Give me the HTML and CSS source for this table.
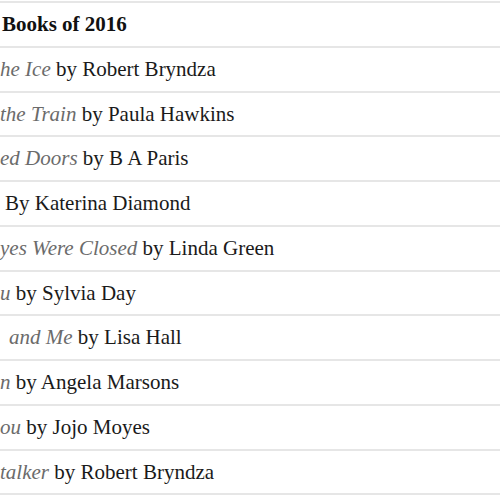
FILE: index.html
```html
<!DOCTYPE html>
<html>
<head>
<meta charset="utf-8">
<link rel="stylesheet" href="styles.css">
</head>
<body>
<ul class="list">
  <li class="row head">Books of 2016</li>
  <li class="row"><em class="title">he Ice</em> by Robert Bryndza</li>
  <li class="row"><em class="title">the Train</em> by Paula Hawkins</li>
  <li class="row"><em class="title">ed Doors</em> by B A Paris</li>
  <li class="row shift">By Katerina Diamond</li>
  <li class="row"><em class="title">yes Were Closed</em> by Linda Green</li>
  <li class="row"><em class="title">u</em> by Sylvia Day</li>
  <li class="row cut"><em class="title">and Me</em> by Lisa Hall</li>
  <li class="row"><em class="title">n</em> by Angela Marsons</li>
  <li class="row"><em class="title">ou</em> by Jojo Moyes</li>
  <li class="row"><em class="title">talker</em> by Robert Bryndza</li>
</ul>
</body>
</html>
```
FILE: styles.css
```css
html, body {
  margin: 0;
  padding: 0;
  background: #fff;
}
body {
  font-family: "Liberation Serif", "Times New Roman", serif;
  font-size: 21px;
  color: #1a1a1a;
  overflow: hidden;
}
.list {
  list-style: none;
  margin: 0;
  padding: 1px 0 0 0;
  border-bottom: 2px solid #e6e6e6;
}
.row {
  border-top: 2px solid #e6e6e6;
  height: 42.77px;
  line-height: 42.77px;
  white-space: nowrap;
  padding-left: 0;
}
.head {
  font-weight: bold;
  color: #111;
  padding-left: 2px;
}
.title {
  color: #6b6b6b;
}
.shift {
  padding-left: 5px;
}
.cut {
  padding-left: 9px;
}
```
